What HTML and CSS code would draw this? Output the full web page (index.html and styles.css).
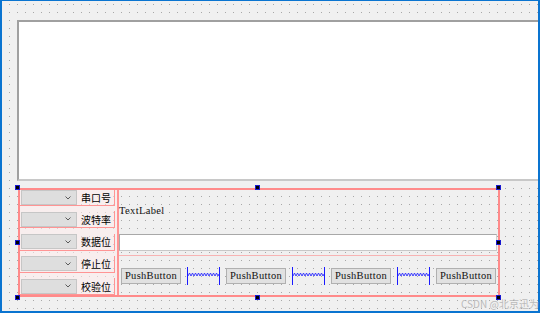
FILE: index.html
```html
<!DOCTYPE html>
<html>
<head>
	<meta charset="utf-8">
	<title>串口设置</title>
	<link rel="stylesheet" href="styles.css">
</head>
<body>
	<div class="canvas">
		<div class="text-edit"></div>
		<div class="grid">
			<div class="left-col">
				<div class="row">
					<div class="combo"><svg width="6" height="4" viewBox="0 0 6 4"><polyline points="0.5,0.5 3,3 5.5,0.5"/></svg></div>
					<span class="cn">串口号</span>
				</div>
				<div class="row">
					<div class="combo"><svg width="6" height="4" viewBox="0 0 6 4"><polyline points="0.5,0.5 3,3 5.5,0.5"/></svg></div>
					<span class="cn">波特率</span>
				</div>
				<div class="row">
					<div class="combo"><svg width="6" height="4" viewBox="0 0 6 4"><polyline points="0.5,0.5 3,3 5.5,0.5"/></svg></div>
					<span class="cn">数据位</span>
				</div>
				<div class="row">
					<div class="combo"><svg width="6" height="4" viewBox="0 0 6 4"><polyline points="0.5,0.5 3,3 5.5,0.5"/></svg></div>
					<span class="cn">停止位</span>
				</div>
				<div class="row">
					<div class="combo"><svg width="6" height="4" viewBox="0 0 6 4"><polyline points="0.5,0.5 3,3 5.5,0.5"/></svg></div>
					<span class="cn">校验位</span>
				</div>
			</div>
			<div class="right-col">
				<div class="text-label">TextLabel</div>
				<div class="line-edit"></div>
				<div class="btn-row">
					<button class="push">PushButton</button>
					<svg class="spacer" width="33" height="18" viewBox="0 0 33 18">
						<line x1="0.5" y1="0" x2="0.5" y2="18"/>
						<line x1="32.5" y1="0" x2="32.5" y2="18"/>
						<polyline class="zig" points="1,9 2.5,6 4,9 5.5,6 7,9 8.5,6 10,9 11.5,6 13,9 14.5,6 16,9 17.5,6 19,9 20.5,6 22,9 23.5,6 25,9 26.5,6 28,9 29.5,6 31,9 32,7"/>
					</svg>
					<button class="push">PushButton</button>
					<svg class="spacer" width="33" height="18" viewBox="0 0 33 18">
						<line x1="0.5" y1="0" x2="0.5" y2="18"/>
						<line x1="32.5" y1="0" x2="32.5" y2="18"/>
						<polyline class="zig" points="1,9 2.5,6 4,9 5.5,6 7,9 8.5,6 10,9 11.5,6 13,9 14.5,6 16,9 17.5,6 19,9 20.5,6 22,9 23.5,6 25,9 26.5,6 28,9 29.5,6 31,9 32,7"/>
					</svg>
					<button class="push">PushButton</button>
					<svg class="spacer" width="33" height="18" viewBox="0 0 33 18">
						<line x1="0.5" y1="0" x2="0.5" y2="18"/>
						<line x1="32.5" y1="0" x2="32.5" y2="18"/>
						<polyline class="zig" points="1,9 2.5,6 4,9 5.5,6 7,9 8.5,6 10,9 11.5,6 13,9 14.5,6 16,9 17.5,6 19,9 20.5,6 22,9 23.5,6 25,9 26.5,6 28,9 29.5,6 31,9 32,7"/>
					</svg>
					<button class="push">PushButton</button>
				</div>
			</div>
			<!-- selection handles -->
			<i class="handle h-tl"></i>
			<i class="handle h-tc"></i>
			<i class="handle h-tr"></i>
			<i class="handle h-ml"></i>
			<i class="handle h-mr"></i>
			<i class="handle h-bl"></i>
			<i class="handle h-bc"></i>
			<i class="handle h-br"></i>
		</div>
	</div>
	<div class="watermark">CSDN @北京迅为</div>
</body>
</html>
```

FILE: styles.css
```css
body{
	margin: 0;
	background-color: #fff;
	font-family: "Noto Sans CJK SC", sans-serif;
}
.canvas{
	box-sizing: border-box;
	width: 540px;
	height: 313px;
	padding: 19px 0 0 15px;
	overflow: hidden;
	border-style: solid;
	border-color: #0a74d0;
	border-width: 1px 2px 2px 2px;
	background-color: #f0f0f0;
	background-image:
		linear-gradient(to right, #f0f0f0 7px, transparent 7px),
		linear-gradient(to bottom, #f0f0f0 7px, #a8a8a8 7px);
	background-size: 8px 8px;
	background-position: 0 -4px;
}
.text-edit{
	box-sizing: border-box;
	width: 540px;
	height: 161px;
	background-color: #fff;
	border-top: 2px solid #a0a0a0;
	border-left: 2px solid #a0a0a0;
	border-bottom: 2px solid #c8c8c8;
}
.grid{
	position: relative;
	box-sizing: border-box;
	display: flex;
	width: 482px;
	height: 109px;
	margin: 7px 0 0 1px;
	border: 2px solid #ff8a8a;
}
.left-col{
	display: flex;
	flex-direction: column;
	justify-content: space-between;
	width: 95px;
	padding-right: 2px;
	background-color: rgba(255, 236, 236, 0.55);
}
.row{
	box-sizing: border-box;
	display: flex;
	align-items: center;
	height: 17px;
	border: 1px solid #ff9494;
	border-top: none;
	border-left: none;
}
.row:first-child{
	height: 16px;
}
.combo{
	box-sizing: border-box;
	display: flex;
	align-items: center;
	justify-content: flex-end;
	width: 56px;
	height: 15px;
	margin-left: 1px;
	padding-right: 5px;
	background-color: #dedede;
	border: 1px solid #c6c6c6;
}
.combo svg{
	fill: none;
	stroke: #5a5a5a;
	stroke-width: 1;
}
.cn{
	padding-left: 4px;
	font-size: 10px;
	line-height: 15px;
	color: #000;
}
.right-col{
	display: flex;
	flex-direction: column;
	width: 379px;
	border-left: 2px solid #ff9494;
}
.text-label{
	display: flex;
	align-items: center;
	height: 41px;
	padding-bottom: 3px;
	font-family: "Liberation Serif", serif;
	font-size: 10.5px;
	letter-spacing: 0.35px;
	color: #111;
}
.line-edit{
	box-sizing: border-box;
	width: 378px;
	height: 17px;
	background-color: #fff;
	border: 1px solid #a8a8a8;
	border-right-color: #d0d0d0;
	border-bottom-color: #c8c8c8;
}
.btn-row{
	display: flex;
	align-items: center;
	gap: 6px;
	height: 39px;
	margin-top: 4px;
	padding-left: 2px;
	border-top: 1px solid #f7b4b4;
}
.push{
	box-sizing: border-box;
	width: 60px;
	height: 16px;
	margin: 0;
	padding: 0;
	background-color: #e1e1e1;
	border: 1px solid #b0b0b0;
	font-family: "Liberation Serif", serif;
	font-size: 10.5px;
	letter-spacing: 0.3px;
	color: #111;
}
.spacer{
	flex: none;
	fill: none;
	stroke: #1a1aff;
	stroke-width: 1;
}
.spacer .zig{
	stroke: #2a2aff;
	stroke-width: 0.9;
}
.handle{
	position: absolute;
	box-sizing: border-box;
	width: 5px;
	height: 5px;
	background-color: #000;
	border: 1px solid #1818d0;
}
.h-tl{ left: -5px; top: -5px; }
.h-tc{ left: calc(50% - 4px); top: -5px; }
.h-tr{ right: -3px; top: -5px; }
.h-ml{ left: -5px; top: calc(50% - 2.5px); }
.h-mr{ right: -3px; top: calc(50% - 2.5px); }
.h-bl{ left: -5px; bottom: -5px; }
.h-bc{ left: calc(50% - 4px); bottom: -5px; }
.h-br{ right: -3px; bottom: -5px; }
.watermark{
	position: absolute;
	left: 461px;
	top: 296px;
	font-size: 10px;
	color: rgba(175, 175, 175, 0.85);
	white-space: nowrap;
}
```
